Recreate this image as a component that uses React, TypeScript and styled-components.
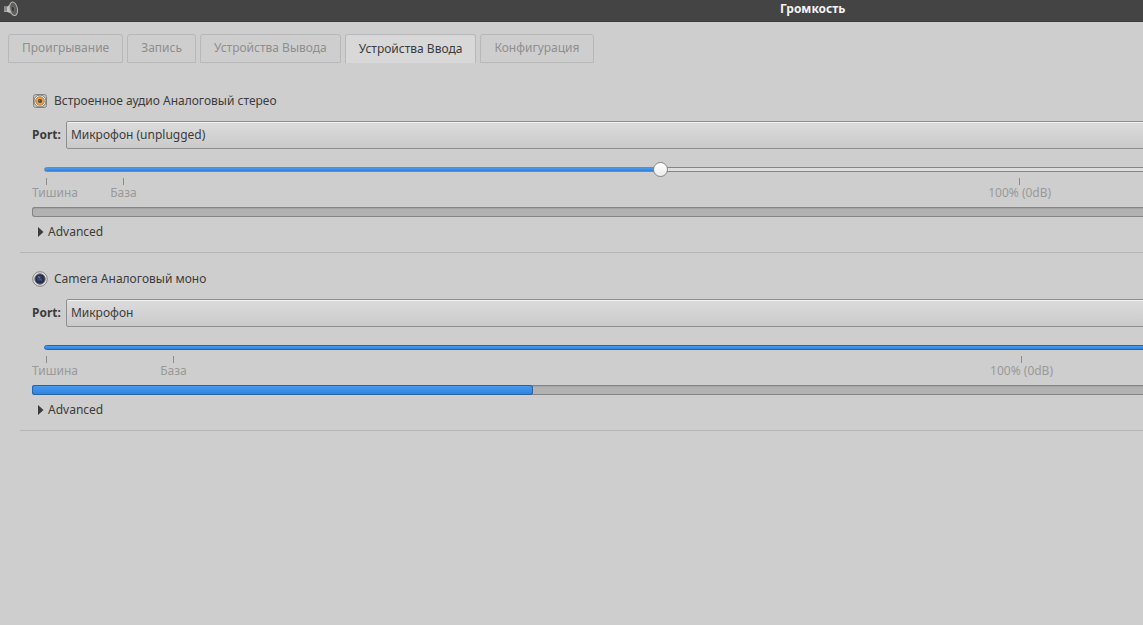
import { useState } from "react";
import type { CSSProperties, ReactNode } from "react";
import styled, { createGlobalStyle, css } from "styled-components";

const GlobalStyle = createGlobalStyle`
  * { box-sizing: border-box; }
  body {
    margin: 0;
    background: #cecece;
    color: #3c3c3c;
    font: 12px/16px "Noto Sans", "Open Sans", sans-serif;
  }
  button, select, input { font: inherit; color: inherit; }
`;

const Screen = styled.div`
  min-height: 100vh;
  overflow-x: hidden;
`;

/* The mixer window is wider than the screen and runs off its right side. */
const MixerWindow = styled.div`
  width: 142.2%;
`;

const TitleBar = styled.header`
  display: grid;
  grid-template-columns: 1fr auto 1fr;
  align-items: start;
  height: 22px;
  padding: 0 2px;
  background: #444444;
  border-bottom: 1px solid #3c3c3c;
  color: #f2f2f2;
`;

const Title = styled.h1`
  margin: 0;
  font-size: 12px;
  line-height: 17px;
  font-weight: 700;
`;

const TabBar = styled.div`
  display: flex;
  gap: 4px;
  padding: 12px 8px 0;
`;

const Tab = styled.button<{ $active: boolean }>`
  height: 29px;
  padding: 0 13px 2px;
  background: #cecece;
  border: 1px solid #b8b8b8;
  border-radius: 3px 3px 0 0;
  color: #8e8e8e;
  line-height: 24px;
  white-space: nowrap;
  ${({ $active }) =>
    $active &&
    css`
      padding-bottom: 0;
      background: #d8d8d8;
      border-bottom: 0;
      color: #3c3c3c;
    `}
`;

const DeviceList = styled.main`
  padding: 12px 20px;
`;

const Device = styled.section`
  padding: 17px 12px 11px;
  border-bottom: 1px solid #b5b5b5;
`;

const DeviceHeading = styled.h2`
  display: flex;
  align-items: center;
  gap: 6px;
  height: 18px;
  margin: 0 0 11px;
  font-size: 12px;
  font-weight: 400;
`;

const PortRow = styled.div`
  display: flex;
  align-items: center;
  gap: 5px;
  margin-bottom: 13px;
`;

const PortLabel = styled.label`
  font-weight: 700;
`;

const PortSelect = styled.select`
  appearance: none;
  flex: 1;
  height: 28px;
  padding: 0 4px;
  border: 1px solid #8f8f8f;
  border-radius: 2px;
  background: linear-gradient(#dcdcdc, #cacaca);
  box-shadow: inset 0 1px #f0f0f0;
`;

const VolumeSlider = styled.input`
  appearance: none;
  display: block;
  width: calc(100% - 24px);
  height: 15px;
  margin: 0 12px;
  background: transparent;

  &::-webkit-slider-runnable-track {
    height: 5px;
    border: 1px solid #858585;
    border-radius: 3px;
    background:
      linear-gradient(#4a9cf0, #2e80dc) 0 0 / var(--level) 100% no-repeat,
      #dedede;
  }

  &[data-full="true"]::-webkit-slider-runnable-track {
    border-color: #2a64a5;
  }

  &::-webkit-slider-thumb {
    appearance: none;
    width: 15px;
    height: 15px;
    margin-top: -6px;
    border: 1px solid #858585;
    border-radius: 50%;
    background: linear-gradient(#ffffff, #ececec);
  }
`;

const Marks = styled.div`
  display: flex;
  height: 23px;
  margin: 1px 0 6px;
  color: #999999;
`;

const Mark = styled.div<{ $first?: boolean }>`
  display: flex;
  flex-direction: column;
  align-items: ${({ $first }) => ($first ? "flex-start" : "center")};
  width: 0;
  white-space: nowrap;

  &::before {
    content: "";
    flex: none;
    width: 1px;
    height: 7px;
    margin-left: ${({ $first }) => ($first ? "14px" : "0")};
    background: #8c8c8c;
  }
`;

const Meter = styled.progress`
  appearance: none;
  display: block;
  width: 100%;
  height: 10px;
  border: 0;

  &::-webkit-progress-bar {
    border-radius: 3px;
    background: #b2b2b2;
    box-shadow: inset 0 0 0 1px #858585, inset 0 2px #a5a5a5;
  }

  &::-webkit-progress-value {
    border-radius: 3px;
    background: linear-gradient(#4a9cf0, #2e80dc);
    box-shadow: inset 0 0 0 1px #2a64a5;
  }
`;

const Advanced = styled.button`
  display: flex;
  align-items: center;
  gap: 4px;
  height: 18px;
  margin-top: 6px;
  padding: 0 6px;
  border: 0;
  background: transparent;
`;

function MixerIcon() {
  return (
    <svg width="17" height="18" viewBox="0 0 17 18" aria-hidden="true">
      <path d="M2 6.500h3.500L10.500 2l3 13.500L5.500 12H2z" fill="#c4c5c1" />
      <path d="M2 7h3v4.500H2z" fill="#8c8d89" />
      <ellipse cx="11.600" cy="8.800" rx="3.800" ry="6.900" transform="rotate(-12 11.600 8.800)" fill="#5e605c" stroke="#b4b5b1" />
      <ellipse cx="10.900" cy="9" rx="1.600" ry="2.800" transform="rotate(-12 10.900 9)" fill="#373836" stroke="#7c7e79" strokeWidth="0.600" />
    </svg>
  );
}

function SpeakerIcon() {
  return (
    <svg width="16" height="16" viewBox="0 0 16 16" aria-hidden="true">
      <rect x="1.500" y="1.500" width="13" height="13" rx="2" fill="#c4c4c1" stroke="#858783" />
      <circle cx="8" cy="8" r="6" fill="#f1f1ee" stroke="#6a6c68" strokeWidth="0.900" />
      <circle cx="8" cy="8" r="4.300" fill="#e8a148" stroke="#a8702f" strokeWidth="0.800" />
      <circle cx="8" cy="8" r="2" fill="#4d4642" />
      <circle cx="7.700" cy="7.700" r="0.700" fill="#77808b" />
    </svg>
  );
}

function CameraIcon() {
  return (
    <svg width="16" height="16" viewBox="0 0 16 16" aria-hidden="true">
      <circle cx="8" cy="8" r="7.300" fill="#e1e1df" stroke="#858783" />
      <circle cx="8" cy="8" r="5.200" fill="#292d48" stroke="#6a6e7c" />
      <circle cx="7.500" cy="7.500" r="2.700" fill="#34416e" />
      <path d="M6 5.500l2 1" stroke="#8088a8" />
      <path d="M7 7.500l3 2" stroke="#744a79" />
    </svg>
  );
}

interface DeviceProps {
  id: string;
  icon: ReactNode;
  name: string;
  port: string;
  volume: number;
  peak: number;
  /* Distance from the left end to the base mark, and on to the 100% mark. */
  base: string;
  full: string;
}

function InputDevice({ id, icon, name, port, volume, peak, base, full }: DeviceProps) {
  const [level, setLevel] = useState(volume);
  const [open, setOpen] = useState(false);
  return (
    <Device>
      <DeviceHeading>
        {icon}
        {name}
      </DeviceHeading>
      <PortRow>
        <PortLabel htmlFor={id}>Port:</PortLabel>
        <PortSelect id={id}>
          <option>{port}</option>
        </PortSelect>
      </PortRow>
      <VolumeSlider
        type="range"
        aria-label={name}
        value={level}
        data-full={level === 100}
        onChange={(e) => setLevel(Number(e.target.value))}
        style={{ "--level": `${level}%` } as CSSProperties}
      />
      <Marks>
        <Mark $first>Тишина</Mark>
        <Mark style={{ marginLeft: base }}>База</Mark>
        <Mark style={{ marginLeft: full }}>100% (0dB)</Mark>
      </Marks>
      <Meter value={peak} max={100} aria-label={name} />
      <Advanced type="button" aria-expanded={open} onClick={() => setOpen(!open)}>
        <svg width="6" height="10" viewBox="0 0 6 10" aria-hidden="true">
          <path d="M0 0l5.500 5L0 10z" fill="#3c3c3c" />
        </svg>
        Advanced
      </Advanced>
    </Device>
  );
}

const tabs = ["Проигрывание", "Запись", "Устройства Вывода", "Устройства Ввода", "Конфигурация"];

export default function App() {
  const [active, setActive] = useState(3);
  return (
    <Screen>
      <GlobalStyle />
      <MixerWindow>
        <TitleBar>
          <MixerIcon />
          <Title>Громкость</Title>
        </TitleBar>
        <TabBar role="tablist">
          {tabs.map((tab, i) => (
            <Tab key={tab} type="button" role="tab" aria-selected={i === active} $active={i === active} onClick={() => setActive(i)}>
              {tab}
            </Tab>
          ))}
        </TabBar>
        <DeviceList>
          <InputDevice id="port-builtin" icon={<SpeakerIcon />} name="Встроенное аудио Аналоговый стерео" port="Микрофон (unplugged)" volume={40} peak={0} base="5.86%" full="57.4%" />
          <InputDevice id="port-camera" icon={<CameraIcon />} name="Camera Аналоговый моно" port="Микрофон" volume={100} peak={32.1} base="9.06%" full="54.32%" />
        </DeviceList>
      </MixerWindow>
    </Screen>
  );
}
